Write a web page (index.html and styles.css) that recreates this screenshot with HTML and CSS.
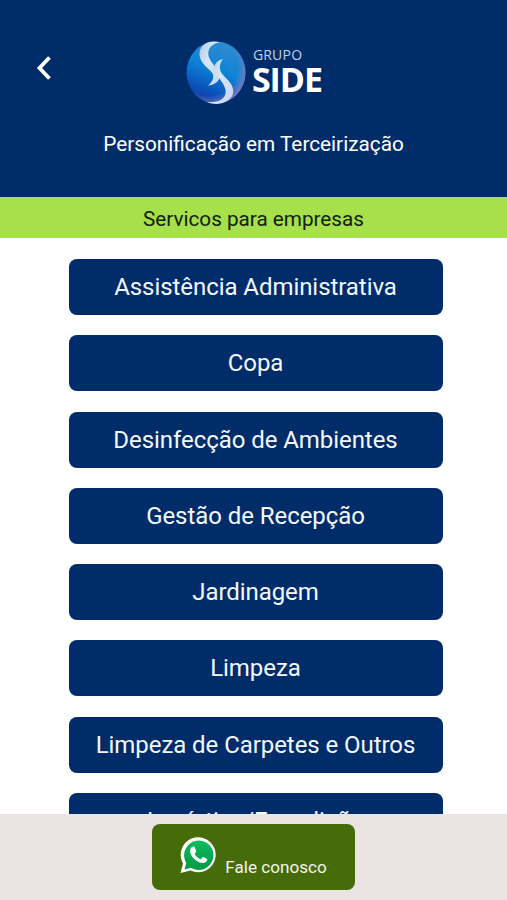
FILE: index.html
```html
<!DOCTYPE html>
<html lang="pt-BR">
<head>
    <meta charset="UTF-8">
    <meta name="viewport" content="width=device-width, initial-scale=1.0">
    <title>Grupo Side</title>
    <link rel="stylesheet" href="styles.css">
</head>
<body>
    <header class="header">
        <button class="back" aria-label="Voltar">
            <svg width="16" height="26" viewBox="0 0 16 26">
                <path d="M13.500 2.500L3.500 13l10 10.500" fill="none" stroke="#fff" stroke-width="3.800"/>
            </svg>
        </button>
        <div class="logo">
            <svg class="logo-icon" width="62" height="66" viewBox="0 0 62 66">
                <defs>
                    <linearGradient id="globe" x1="0.65" y1="0.1" x2="0.3" y2="1">
                        <stop offset="0" stop-color="#2b8ad2"/>
                        <stop offset="0.4" stop-color="#0d83d6"/>
                        <stop offset="0.75" stop-color="#0a55bd"/>
                        <stop offset="1" stop-color="#1238a0"/>
                    </linearGradient>
                    <radialGradient id="rim" cx="0.38" cy="0.38" r="0.66">
                        <stop offset="0.75" stop-color="#6f7cc4" stop-opacity="0"/>
                        <stop offset="1" stop-color="#7378bd"/>
                    </radialGradient>
                    <linearGradient id="swirl" x1="0" y1="0" x2="1" y2="1">
                        <stop offset="0" stop-color="#a9c6ea"/>
                        <stop offset="0.4" stop-color="#d9e6f8"/>
                        <stop offset="1" stop-color="#c3d7f1"/>
                    </linearGradient>
                </defs>
                <ellipse cx="31" cy="33.500" rx="29.500" ry="31" fill="url(#globe)"/>
                <ellipse cx="31" cy="33.500" rx="29.500" ry="31" fill="url(#rim)"/>
                <path d="M35 3.500C25 0 15 5 14.500 14C14 23 22 28 26.500 33C30 37 28 43 23 46.500C30 46 34.500 42 35 37C35.500 31 25 24 23.500 17C22 10 27 4 35 3.500Z" fill="url(#swirl)"/>
                <path d="M38 20C32 21 28.500 26 29.500 31C31 37 39 43 40.500 51C42 59 34 64 22 63C32 67.500 44 64 47.500 56C51 46 41 40 36.500 34C33.500 29 35 23.500 38 20Z" fill="url(#swirl)"/>
            </svg>
            <div class="logo-text">
                <span class="logo-grupo">GRUPO</span>
                <span class="logo-side">SIDE</span>
            </div>
        </div>
        <p class="slogan">Personificação em Terceirização</p>
    </header>
    <h1 class="section-title">Servicos para empresas</h1>
    <main class="services">
        <button class="service">Assistência Administrativa</button>
        <button class="service">Copa</button>
        <button class="service">Desinfecção de Ambientes</button>
        <button class="service">Gestão de Recepção</button>
        <button class="service">Jardinagem</button>
        <button class="service">Limpeza</button>
        <button class="service">Limpeza de Carpetes e Outros</button>
        <button class="service">Logística/Expedição</button>
    </main>
    <footer class="footer">
        <button class="whatsapp">
            <svg width="37" height="38" viewBox="0 0 37 38">
                <defs>
                    <linearGradient id="bubble" x1="0" y1="0" x2="0" y2="1">
                        <stop offset="0" stop-color="#08bd5c"/>
                        <stop offset="1" stop-color="#059a43"/>
                    </linearGradient>
                </defs>
                <path d="M0.500 37L3 27.500A17.500 17.500 0 1 1 10.500 34.500Z" fill="#fff"/>
                <path d="M4.500 33.500L6.300 27A14.700 14.700 0 1 1 11 31.700Z" fill="url(#bubble)"/>
                <path d="M13.300 10.500C12.600 10.500 10 11.800 10 15C10 18.500 13 22 15.500 24C18 26 21 27.300 23.500 27C25.500 26.800 27.300 25.300 27.300 23.300C27.300 22.700 23.500 20.900 23 20.900C22.300 20.900 21.300 23.200 20.500 23.200C19.500 23.200 15 19.500 14.700 18C14.500 17.300 16.300 16.500 16.200 15.400C16.100 14.600 14.900 11.100 14.400 10.700C14.200 10.500 13.600 10.500 13.300 10.500Z" fill="#fff"/>
            </svg>
            <span class="whatsapp-text">Fale conosco</span>
        </button>
    </footer>
</body>
</html>
```
FILE: styles.css
```css
* {
    box-sizing: border-box;
}

body {
    margin: 0;
    height: 100vh;
    display: flex;
    flex-direction: column;
    overflow: hidden;
    background-color: #fff;
    font-family: Roboto, sans-serif;
}

button {
    border: none;
    padding: 0;
    font-family: inherit;
    cursor: pointer;
}

.header {
    flex: none;
    display: grid;
    grid-template-columns: 88px 1fr 88px;
    grid-template-rows: 66px auto;
    row-gap: 24px;
    height: 197px;
    padding-top: 39px;
    background-color: #002d69;
    color: #fff;
}

.back {
    display: flex;
    align-items: center;
    padding: 0 0 8px 36px;
    background: none;
}

.logo {
    display: flex;
    justify-content: center;
    gap: 5px;
}

.logo-text {
    display: flex;
    flex-direction: column;
    padding-top: 7px;
    font-family: "Open Sans", sans-serif;
}

.logo-grupo {
    padding-left: 1px;
    font-size: 14px;
    line-height: 18px;
    letter-spacing: 0.2px;
    color: #c3d0e3;
}

.logo-side {
    font-size: 34px;
    font-weight: bold;
    line-height: 31px;
    letter-spacing: -1px;
}

.slogan {
    grid-column: 1 / -1;
    margin: 0;
    font-size: 20.750px;
    line-height: 31px;
    text-align: center;
}

.section-title {
    flex: none;
    margin: 0;
    height: 41px;
    background-color: #a6e04a;
    color: #14200a;
    font-size: 20.700px;
    font-weight: normal;
    line-height: 44px;
    text-align: center;
}

.services {
    flex: 1;
    min-height: 0;
    display: flex;
    flex-direction: column;
    align-items: center;
    gap: 20.300px;
    padding: 21px 0 0 4px;
    overflow: hidden;
}

.service {
    flex: none;
    width: 374px;
    height: 56px;
    border-radius: 8px;
    background-color: #002d69;
    color: #f4f8ff;
    font-size: 24px;
    letter-spacing: -0.06px;
}

.footer {
    flex: none;
    display: flex;
    justify-content: center;
    align-items: flex-start;
    height: 86px;
    padding-top: 10px;
    background-color: #ece3e3;
}

.whatsapp {
    display: flex;
    justify-content: center;
    gap: 8px;
    width: 203px;
    height: 66px;
    padding-top: 12px;
    border-radius: 8px;
    background-color: #466b09;
    color: #f1f5ea;
}

.whatsapp-text {
    padding-top: 20px;
    font-size: 17.100px;
    line-height: 23px;
}
```
